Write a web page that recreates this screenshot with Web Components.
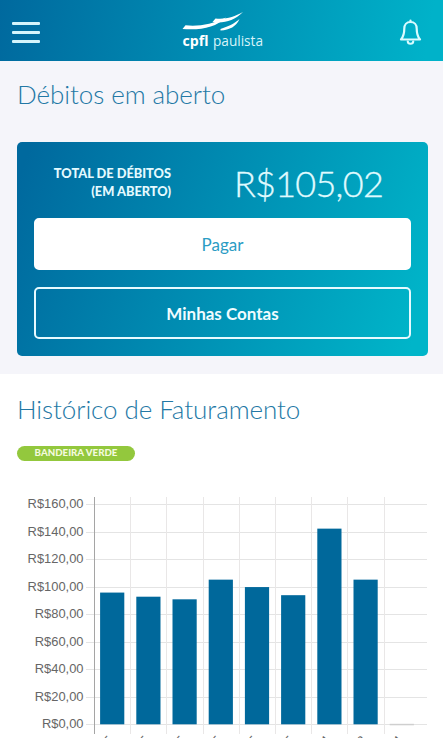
<!DOCTYPE html>
<html lang="pt-BR">
<head>
<meta charset="UTF-8">
<meta name="viewport" content="width=device-width, initial-scale=1">
<title>CPFL Paulista</title>
<style>
    html, body {
        margin: 0;
        height: 738px;
        overflow: hidden;
        background: #fff;
        font-family: Lato, 'Liberation Sans', sans-serif;
    }
</style>
</head>
<body>
<cpfl-app></cpfl-app>

<script>
class CpflHeader extends HTMLElement {
    constructor() {
        super();
        this.attachShadow({ mode: 'open' });
    }

    connectedCallback() {
        this.shadowRoot.innerHTML = `
            <style>
                :host {
                    display: flex;
                    align-items: center;
                    justify-content: space-between;
                    box-sizing: border-box;
                    height: 61px;
                    padding: 0 21px 0 12px;
                    background: linear-gradient(100deg, #00699e 0%, #00b2c9 96%);
                }
                svg { display: block; }
                .menu { display: grid; gap: 6px; width: 28px; padding-top: 4px; }
                .menu i { height: 3px; border-radius: 1px; background: #d5f5fc; }
                .logo { padding-left: 10px; overflow: visible; }
                .bell { padding-top: 4px; }
            </style>
            <div class="menu"><i></i><i></i><i></i></div>
            <svg class="logo" width="90" height="61" viewBox="180 0 90 61">
                <g fill="#fff">
                    <path d="M182.5 29 L185.5 25.3 C199 26.5 212 24.5 226 17.500 C216 27.300 201 30.500 182.5 29Z"/>
                    <path d="M212.500 22 L215.500 18.500 C226 19.500 234 17 243 12 C234 21 224 23.500 212.500 22Z"/>
                    <path d="M220.500 29 C228 26.500 234 24 239.500 19 C236 26.500 230 30 220.500 30.500Z"/>
                </g>
                <text x="182.5" y="45.5" font-family="Open Sans" font-size="14.5" font-weight="700" fill="#fff" textLength="26" lengthAdjust="spacingAndGlyphs">cpfl</text>
                <text x="213" y="45.5" font-family="Open Sans" font-size="14.5" fill="#d9f4f9" textLength="50" lengthAdjust="spacingAndGlyphs">paulista</text>
            </svg>
            <svg class="bell" width="23" height="27" viewBox="0 0 23 27" fill="none" stroke="#d9fbff" stroke-width="2.2" stroke-linejoin="round" stroke-linecap="round">
                <path d="M11.5 1.5v1.5M11.5 3C7.5 3 5.3 6 5.3 9.5C5.3 15.5 4.5 17.5 2 20.5H21C18.5 17.5 17.7 15.5 17.7 9.5C17.7 6 15.5 3 11.5 3Z"/>
                <path d="M8.800 22.500C9 25.500 14 25.500 14.200 22.500"/>
            </svg>
        `;
    }
}

class CpflTitle extends HTMLElement {
    constructor() {
        super();
        this.attachShadow({ mode: 'open' });
    }

    connectedCallback() {
        this.shadowRoot.innerHTML = `
            <style>
                :host {
                    display: block;
                    font-size: 26px;
                    line-height: 34px;
                    font-weight: 300;
                    letter-spacing: -0.07px;
                    color: #2378a5;
                    white-space: nowrap;
                }
            </style>
            <slot></slot>
        `;
    }
}

class CpflButton extends HTMLElement {
    constructor() {
        super();
        this.attachShadow({ mode: 'open' });
    }

    connectedCallback() {
        this.shadowRoot.innerHTML = `
            <style>
                :host {
                    display: flex;
                    align-items: center;
                    justify-content: center;
                    box-sizing: border-box;
                    height: 52px;
                    border: 2px solid #e6faff;
                    border-radius: 5px;
                    color: #f0fcff;
                    font-size: 17px;
                    font-weight: 700;
                }
                :host([filled]) {
                    background: #fff;
                    border-color: #fff;
                    color: #2b9cc4;
                    font-weight: 400;
                }
            </style>
            <slot></slot>
        `;
    }
}

class CpflDebitCard extends HTMLElement {
    constructor() {
        super();
        this.attachShadow({ mode: 'open' });
    }

    connectedCallback() {
        this.shadowRoot.innerHTML = `
            <style>
                :host {
                    display: grid;
                    grid-template-rows: 76px 52px 17px 52px;
                    box-sizing: border-box;
                    height: 214px;
                    padding: 0 17px;
                    border-radius: 5px;
                    background: linear-gradient(110deg, #00699e 3%, #00b5c9 96%);
                }
                .total { display: flex; }
                .label {
                    width: 137px;
                    padding-top: 22px;
                    text-align: right;
                    font-size: 12.8px;
                    line-height: 18px;
                    font-weight: 900;
                    color: #e4faff;
                    white-space: nowrap;
                }
                .value {
                    padding: 19px 0 0 63px;
                    font-size: 36px;
                    line-height: 44px;
                    font-weight: 300;
                    letter-spacing: -0.75px;
                    color: #e0fbff;
                    -webkit-text-stroke: 0.3px #e0fbff;
                }
                ::slotted(cpfl-button:last-of-type) { grid-row: 4; }
            </style>
            <div class="total">
                <div class="label"><slot name="label"></slot></div>
                <div class="value"><slot name="value"></slot></div>
            </div>
            <slot></slot>
        `;
    }
}

class CpflBadge extends HTMLElement {
    constructor() {
        super();
        this.attachShadow({ mode: 'open' });
    }

    connectedCallback() {
        this.shadowRoot.innerHTML = `
            <style>
                :host {
                    display: block;
                    width: 118px;
                    height: 15px;
                    border-radius: 8px;
                    background: #93c83d;
                    color: #f3fadf;
                    font-size: 9.7px;
                    line-height: 13px;
                    font-weight: 900;
                    text-align: center;
                }
            </style>
            <slot></slot>
        `;
    }
}

class CpflChart extends HTMLElement {
    constructor() {
        super();
        this.attachShadow({ mode: 'open' });
    }

    connectedCallback() {
        const values = this.getAttribute('values').split(',').map(Number);
        const labels = this.getAttribute('labels').split(',');
        const left = 94.5;
        const zero = 724.3;
        const step = 36.2;
        const scale = 27.5 / 20;
        let grid = '';
        let bars = '';
        let texts = '';

        for (let v = 0; v <= 160; v += 20) {
            const y = Math.round(zero - v * scale) + 0.5;
            grid += `<path d="M86 ${y}H427" stroke="#e4e4e4"/>`;
            texts += `<text x="83.5" y="${y + 3.7}" text-anchor="end">R$${v},00</text>`;
        }
        values.forEach((v, i) => {
            const x = left + i * step;
            const h = v * scale;
            grid += `<path d="M${Math.floor(x) + 0.5} 497V734" stroke="${i ? '#e9e7e7' : '#a5a5a5'}"/>`;
            bars += v
                ? `<rect x="${x + 5.6}" y="${zero - h}" width="24.2" height="${h}" fill="#00689b"/>`
                : `<rect x="${x + 5.6}" y="723.8" width="24.2" height="1.5" fill="#cfcfcf"/>`;
            texts += `<text transform="translate(${x + 19.5} 740.5) rotate(-50)" text-anchor="end">${labels[i]}</text>`;
        });

        this.shadowRoot.innerHTML = `
            <style>
                :host { display: block; height: 258px; overflow: hidden; }
                svg { display: block; }
                text { font-family: 'Liberation Sans', sans-serif; font-size: 12.9px; fill: #666; }
            </style>
            <svg width="443" height="258" viewBox="0 480 443 258">${grid}${bars}${texts}</svg>
        `;
    }
}

class CpflApp extends HTMLElement {
    constructor() {
        super();
        this.attachShadow({ mode: 'open' });
    }

    connectedCallback() {
        this.shadowRoot.innerHTML = `
            <style>
                :host { display: block; height: 738px; overflow: hidden; }
                .debits {
                    box-sizing: border-box;
                    height: 313px;
                    padding: 16px 15px 0 17px;
                    background: #f5f5fa;
                }
                cpfl-debit-card { margin-top: 31px; }
                .history { padding: 18px 17px 0; height: 106px; box-sizing: border-box; }
                cpfl-badge { margin-top: 20px; }
            </style>
            <cpfl-header></cpfl-header>
            <section class="debits">
                <cpfl-title>Débitos em aberto</cpfl-title>
                <cpfl-debit-card>
                    <span slot="label">TOTAL DE DÉBITOS<br>(EM ABERTO)</span>
                    <span slot="value">R$105,02</span>
                    <cpfl-button filled>Pagar</cpfl-button>
                    <cpfl-button>Minhas Contas</cpfl-button>
                </cpfl-debit-card>
            </section>
            <section class="history">
                <cpfl-title>Histórico de Faturamento</cpfl-title>
                <cpfl-badge>BANDEIRA VERDE</cpfl-badge>
            </section>
            <cpfl-chart values="95.8,92.8,90.9,105.2,99.8,93.9,142.3,105.2,0" labels="5,5,5,5,5,5,4,8,4"></cpfl-chart>
        `;
    }
}

customElements.define('cpfl-header', CpflHeader);
customElements.define('cpfl-title', CpflTitle);
customElements.define('cpfl-button', CpflButton);
customElements.define('cpfl-debit-card', CpflDebitCard);
customElements.define('cpfl-badge', CpflBadge);
customElements.define('cpfl-chart', CpflChart);
customElements.define('cpfl-app', CpflApp);
</script>
</body>
</html>
